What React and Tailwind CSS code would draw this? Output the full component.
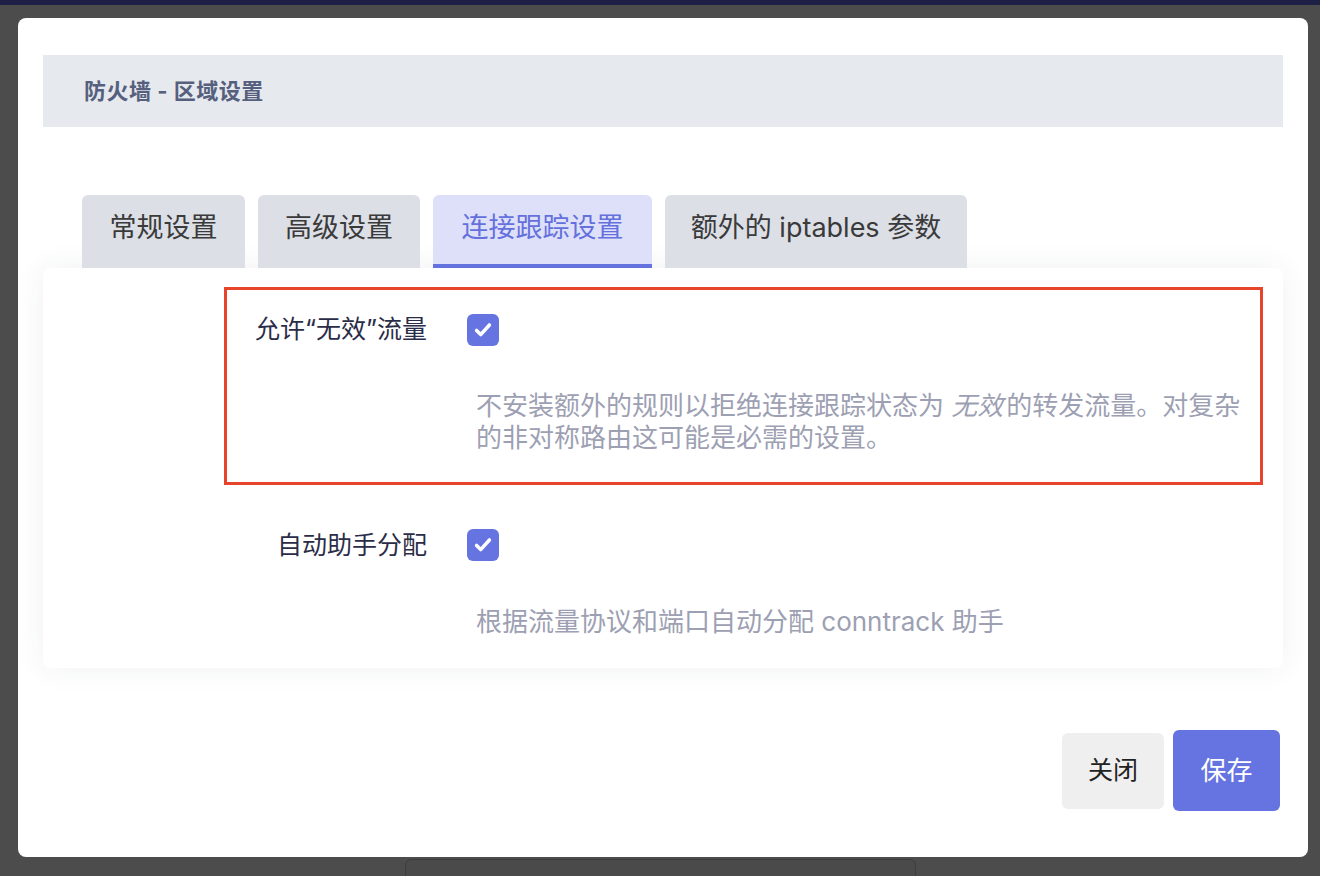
import React from 'react';

const tabs = [
  { id: 'general', label: '常规设置', w: 'w-[163px]' },
  { id: 'advanced', label: '高级设置', w: 'w-[162px]' },
  { id: 'conntrack', label: '连接跟踪设置', w: 'w-[219px]' },
  { id: 'extra', label: '额外的 iptables 参数', w: 'w-[302px]' },
];

const Check = () => (
  <div className="flex h-[32px] w-[32px] shrink-0 items-center justify-center rounded-[6px] bg-[#6574e0]">
    <svg width="22" height="22" viewBox="0 0 24 24" fill="none">
      <path d="M5 12.5l4.5 4.5L19 6.5" stroke="#fff" strokeWidth="3.8" strokeLinecap="round" strokeLinejoin="round" />
    </svg>
  </div>
);

const App = () => {
  const activeTab = 'conntrack';

  return (
    <div className="h-[876px] w-[1320px] overflow-hidden bg-[#4c4c4c] font-['Inter','Noto_Sans_CJK_SC',sans-serif]">
      <div className="h-[5px] bg-[#1e2046]"></div>

      {/* Modal */}
      <div className="ml-[18px] mt-[13px] h-[839px] w-[1290px] rounded-[8px] bg-white px-[25px] pt-[37px]">
        <div className="flex h-[72px] items-center bg-[#e6e9ed] pl-[41px]">
          <h1 className="text-[22px] font-bold tracking-[0.5px] text-[#56607e]">防火墙 - 区域设置</h1>
        </div>

        {/* Tabs */}
        <div className="mt-[68px] flex gap-[13px] pl-[39px]">
          {tabs.map(tab => (
            <div
              key={tab.id}
              className={`relative flex h-[73px] ${tab.w} items-start justify-center rounded-t-[6px] pt-[13px] text-[27px] ${
                activeTab === tab.id ? 'bg-[#dee0fa] text-[#6470dc]' : 'bg-[#dcdfe6] text-[#3a3a3a]'
              }`}
            >
              {tab.label}
              {activeTab === tab.id && <div className="absolute bottom-0 left-0 right-0 h-[4px] bg-[#6472e0]"></div>}
            </div>
          ))}
        </div>

        {/* Panel */}
        <div className="h-[400px] rounded-[8px] bg-white pl-[181px] pr-[20px] pt-[19px] shadow-[0_0_30px_rgba(40,50,90,0.07)]">
          <div className="border-[3px] border-[#e8442b] pb-[28px] pt-[21px]">
            <div className="flex items-center">
              <div className="w-[200px] text-right text-[25px] text-[#2b2d48]">允许“无效”流量</div>
              <div className="ml-[40px]"><Check /></div>
            </div>
            <div className="mt-[41px] pl-[249px] pr-[10px] text-[26px] leading-[32px] text-[#9d9fb3]">
              <div className="flex whitespace-nowrap">
                <span>不安装额外的规则以拒绝连接跟踪状态为&nbsp;</span>
                <i className="pr-[3px]">无效</i>
                <span>的转发流量。对复杂</span>
              </div>
              <div>的非对称路由这可能是必需的设置。</div>
            </div>
          </div>

          <div className="ml-[3px] mt-[42px] flex items-center">
            <div className="w-[200px] text-right text-[25px] text-[#2b2d48]">自动助手分配</div>
            <div className="ml-[40px]"><Check /></div>
          </div>
          <p className="ml-[3px] mt-[42px] pl-[249px] text-[26px] leading-[32px] text-[#9d9fb3]">
            根据流量协议和端口自动分配 conntrack 助手
          </p>
        </div>

        {/* Buttons */}
        <div className="mt-[62px] flex items-center justify-end gap-[9px] pr-[3px]">
          <button className="h-[76px] w-[102px] rounded-[6px] bg-[#efefef] text-[25px] text-[#222]">关闭</button>
          <button className="h-[81px] w-[107px] rounded-[6px] bg-[#6574e0] text-[26px] text-white">保存</button>
        </div>
      </div>

      <div className="ml-[405px] mt-[2px] h-[20px] w-[511px] rounded-t-[6px] border border-[#3d3d3d] bg-[#4a4a4a]"></div>
    </div>
  );
};

export default App;
